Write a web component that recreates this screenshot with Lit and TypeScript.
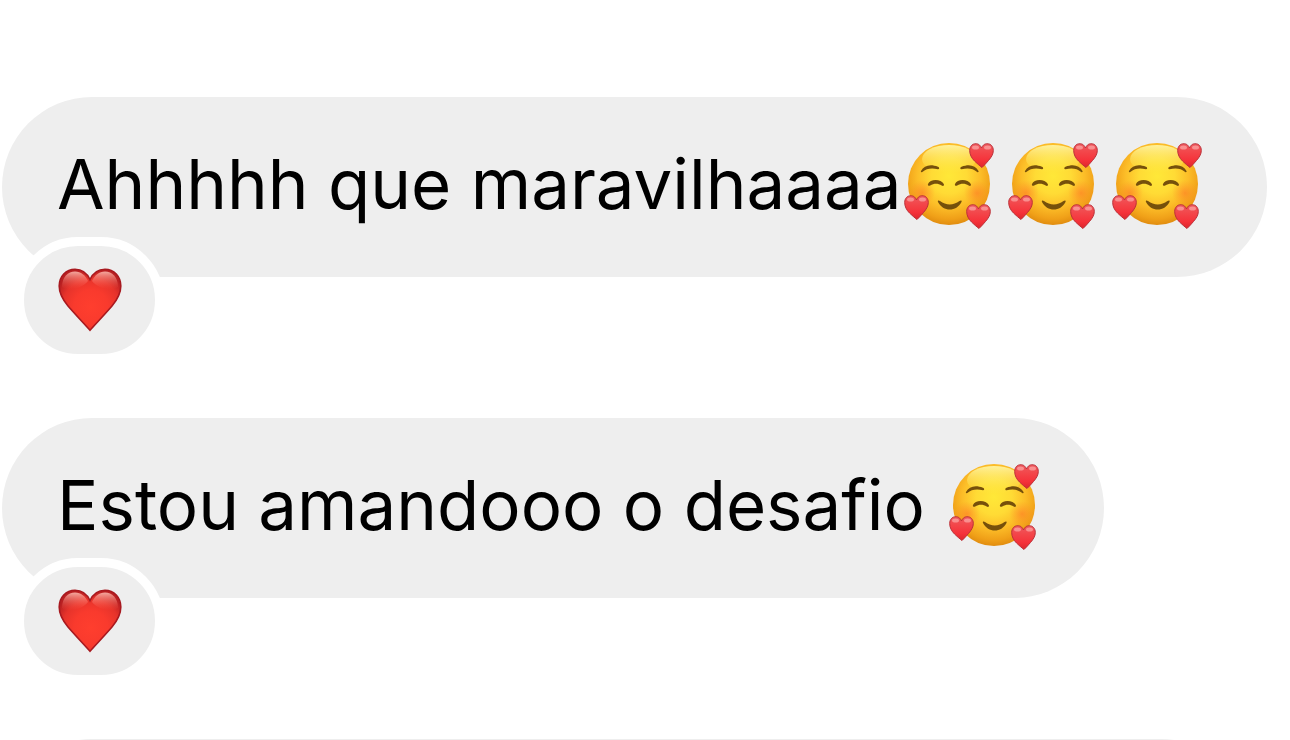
import { LitElement, html, css } from "lit";
import { customElement, property } from "lit/decorators.js";

@customElement("red-heart")
class RedHeart extends LitElement {
  static styles = css`
    :host { display: block; }
    svg { display: block; width: 64px; height: 64px; }
  `;
  render() {
    return html`<svg viewBox="0 0 64 64" aria-hidden="true">
      <defs>
        <radialGradient id="body" gradientUnits="userSpaceOnUse" cx="33" cy="39" r="38">
          <stop offset="0" stop-color="#ff3e2e" />
          <stop offset="0.45" stop-color="#f93a2d" />
          <stop offset="0.75" stop-color="#e6332b" />
          <stop offset="1" stop-color="#b92022" />
        </radialGradient>
        <linearGradient id="gloss" x1="0" y1="0" x2="0" y2="1">
          <stop offset="0" stop-color="#ffc0b4" stop-opacity="0.85" />
          <stop offset="1" stop-color="#ff5a4a" stop-opacity="0" />
        </linearGradient>
      </defs>
      <path fill="url(#body)" stroke="#a8191f" stroke-width="1.6"
        d="M32 11.500C29 5 23.500 1.200 17 1.200C8 1.200 1.200 8.500 1.200 18C1.200 26 5 32 10 38C16.500 45.500 24.500 54 32 62.300C39.500 54 47.500 45.500 54 38C59 32 62.800 26 62.800 18C62.800 8.500 56 1.200 47 1.200C40.500 1.200 35 5 32 11.500Z" />
      <path fill="url(#gloss)" d="M4 19C4 9 10 3.500 17 3.500C23 3.500 27.500 7.500 30 13C25 20 10 24 4 19Z" />
      <path fill="url(#gloss)" d="M60 19C60 9 54 3.500 47 3.500C41 3.500 36.500 7.500 34 13C39 20 54 24 60 19Z" />
    </svg>`;
  }
}

@customElement("loving-face")
class LovingFace extends LitElement {
  static styles = css`
    :host { display: block; flex: none; }
    svg { display: block; width: 92px; height: 90px; }
  `;
  render() {
    return html`<svg viewBox="0 0 92 90" role="img" aria-label="Smiling face with hearts">
      <defs>
        <radialGradient id="face" gradientUnits="userSpaceOnUse" cx="45" cy="35" r="51">
          <stop offset="0" stop-color="#ffe838" />
          <stop offset="0.35" stop-color="#ffdb35" />
          <stop offset="0.62" stop-color="#fcbd28" />
          <stop offset="0.84" stop-color="#f0a018" />
          <stop offset="1" stop-color="#dc860c" />
        </radialGradient>
        <linearGradient id="shine" x1="0" y1="0" x2="0" y2="1">
          <stop offset="0" stop-color="#fff7a8" stop-opacity="0.9" />
          <stop offset="1" stop-color="#fff04a" stop-opacity="0" />
        </linearGradient>
        <radialGradient id="cheek">
          <stop offset="0" stop-color="#ff7a26" stop-opacity="0.6" />
          <stop offset="1" stop-color="#ff8a26" stop-opacity="0" />
        </radialGradient>
        <linearGradient id="heart" x1="0" y1="0" x2="0" y2="1">
          <stop offset="0" stop-color="#ee5a60" />
          <stop offset="0.35" stop-color="#f3464a" />
          <stop offset="0.7" stop-color="#f5323a" />
          <stop offset="1" stop-color="#dd262c" />
        </linearGradient>
        <g id="small">
          <path fill="url(#heart)" stroke="#bb3038" stroke-width="1"
            d="M12.500 5C11 1.500 8.800 .7 6.800 .7C3 .7 .7 3.600 .7 7.500C.7 11.500 2.500 15 5.500 18C8 20.500 10.500 22.500 13 24.500C15 22.500 17.500 20 19.500 17.500C22.500 14 24.300 11 24.300 7.500C24.300 3.600 22 .7 18.200 .7C16.200 .7 14 1.500 12.500 5Z" />
          <ellipse cx="6.500" cy="4.500" rx="3.500" ry="2" fill="#ffb9b5" opacity="0.6" />
          <ellipse cx="18.500" cy="4.500" rx="3.500" ry="2" fill="#ffb9b5" opacity="0.6" />
        </g>
      </defs>
      <circle cx="45" cy="43" r="41" fill="url(#face)" />
      <ellipse cx="45" cy="18" rx="27" ry="14" fill="url(#shine)" />
      <circle cx="18" cy="52" r="13" fill="url(#cheek)" />
      <circle cx="73" cy="52" r="13" fill="url(#cheek)" />
      <g fill="#76500b">
        <path d="M17 30C20 24.500 26 22.500 34 25.700C35.400 26.300 35.800 28 34 28.300C27.500 26.700 22.500 27.500 18.300 31C17.300 31.500 16.500 31 17 30Z" />
        <path d="M74.500 30C71.500 24.500 65.500 22.500 57.500 25.700C56.100 26.300 55.700 28 57.500 28.300C64 26.700 69 27.500 73.200 31C74.200 31.500 75 31 74.500 30Z" />
        <path d="M24 43C26 37.500 37 37.500 39.800 43C40.500 44.800 39 45.400 37.700 44.500C34 42.300 30 42.300 26.200 44.500C24.800 45.300 23.400 44.500 24 43Z" />
        <path d="M51 43C53 37.500 64 37.500 66.800 43C67.500 44.800 66 45.400 64.700 44.500C61 42.300 57 42.300 53.200 44.500C51.800 45.300 50.400 44.500 51 43Z" />
        <path d="M34 61C33.400 59.500 34.500 58.900 36 60C42 64.500 49.500 64.500 55.500 60C57 58.900 58.100 59.500 57.500 61C52.500 71 39 71 34 61Z" />
      </g>
      <use href="#small" x="65" y="2" />
      <use href="#small" x="0" y="54" />
      <use href="#small" x="62" y="63" />
    </svg>`;
  }
}

@customElement("chat-message")
class ChatMessage extends LitElement {
  @property() text = "";
  @property({ type: Number }) faces = 0;
  @property({ type: Boolean }) spaced = false;

  static styles = css`
    :host { display: block; }
    .message { display: flex; flex-direction: column; align-items: flex-start; }
    .bubble {
      display: flex; align-items: center; box-sizing: border-box;
      min-height: 180px; padding: 0 63px 2px 55px; border-radius: 90px;
      background: #eee; color: #000;
    }
    .text { margin: 0; padding-bottom: 4px; font: 400 69px/84px Inter, "Liberation Sans", sans-serif; white-space: nowrap; }
    .faces { display: flex; gap: 12px; margin-left: 2px; }
    .spaced { margin-left: 24px; }
    .reaction {
      display: flex; align-items: center; justify-content: center; box-sizing: content-box;
      position: relative; margin: -40px 0 0 13px; padding: 0;
      width: 131px; height: 108px; border: 9px solid #fff; border-radius: 68px;
      background: #eee;
    }
  `;
  render() {
    return html`<article class="message">
      <div class="bubble">
        <p class="text">${this.text}</p>
        <div class="faces ${this.spaced ? "spaced" : ""}">
          ${Array.from({ length: this.faces }, () => html`<loving-face></loving-face>`)}
        </div>
      </div>
      <button class="reaction" type="button" aria-label="Heart reaction"><red-heart></red-heart></button>
    </article>`;
  }
}

@customElement("app-root")
class AppRoot extends LitElement {
  static styles = css`
    :host { display: block; height: 100vh; overflow: hidden; background: #fff; }
    .thread { display: flex; flex-direction: column; gap: 55px; padding: 97px 23px 0 2px; }
    .next { height: 180px; margin-right: 16px; border-radius: 90px; background: #eee; }
  `;
  render() {
    return html`<main class="thread">
      <chat-message text="Ahhhhh que maravilhaaaa" faces="3"></chat-message>
      <chat-message text="Estou amandooo o desafio" faces="1" spaced></chat-message>
      <div class="next"></div>
    </main>`;
  }
}
